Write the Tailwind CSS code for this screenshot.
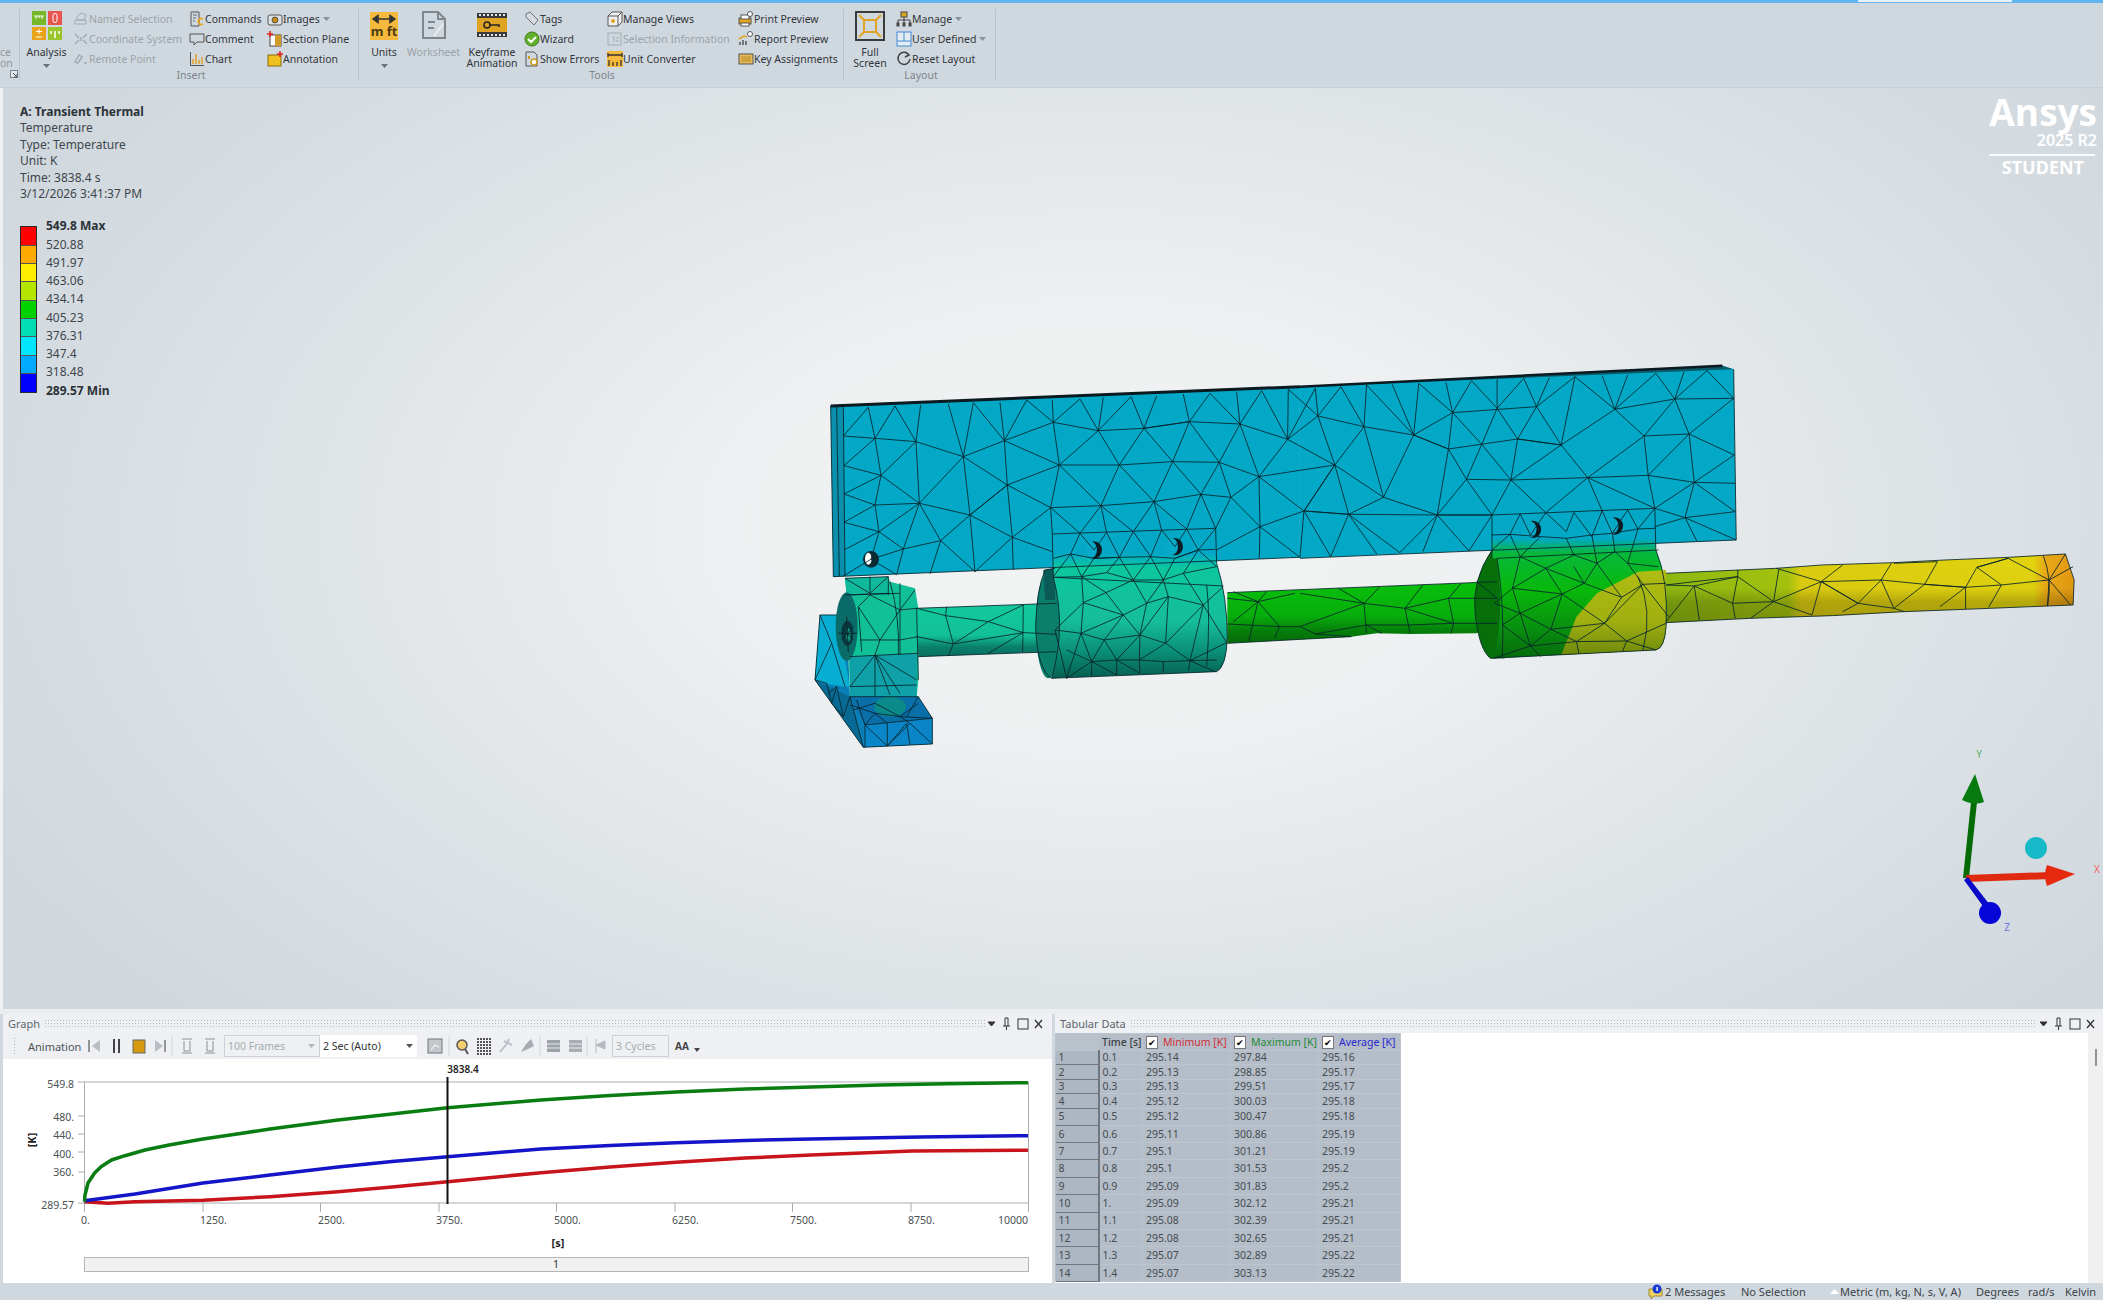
<!DOCTYPE html>
<html lang="en">
<head>
  <meta charset="UTF-8">
  <title>Ansys Mechanical - Transient Thermal</title>
  <script src="https://cdn.jsdelivr.net/npm/@tailwindcss/browser@4"></script>
</head>
<body class="font-['Noto_Sans',sans-serif] bg-[#d0d8df] overflow-hidden">
<div class="flex flex-col w-[2103px] h-[1300px]">

  <!-- top strip -->
  <div class="flex h-[3px] bg-[#62b4f0]"><div class="ml-[1858px] w-[154px] h-[2px] bg-[#e9f2fa]"></div></div>

  <!-- ribbon -->
  <div class="flex h-[85px] pt-[6px] bg-[#d0d8df] text-[10.5px] leading-none text-[#30363b] border-b border-[#c6ced5]">

    <div class="w-[20px] h-[71px] border-r border-[#bcc4cb] pr-[8px] text-right text-[#8e979e] flex flex-col overflow-hidden">
      <div class="h-[38px]"></div>
      <div class="leading-[10.5px]">ce<br>on</div>
      <svg class="ml-[10px] mt-[2px] shrink-0" width="9" height="9" viewBox="0 0 9 9"><rect x=".5" y=".5" width="7" height="7" fill="#e6e9ec" stroke="#7a848c"/><path d="M3 3l4 4M7 4v3H4" fill="none" stroke="#4b5358"/></svg>
    </div>

    <!-- Insert -->
    <div class="w-[339px] h-[71px] border-r border-[#bcc4cb] flex flex-col">
      <div class="h-[60px] flex">
        <div class="w-[48px] flex flex-col items-center">
          <div class="mt-[2px] grid grid-cols-[14px_14px] grid-rows-[14px_13px] gap-[2px] ml-[5px]">
            <div class="bg-[#76b82a] flex items-center justify-center"><svg width="10" height="6"><path d="M0 1h10M2 1v3M5 1v2M8 1v3" stroke="#fff"/></svg></div>
            <div class="bg-[#e8554e] flex items-center justify-center"><svg width="6" height="10"><rect x="1" y=".5" width="4" height="9" rx="2" fill="none" stroke="#fff"/></svg></div>
            <div class="bg-[#e8a31a] flex items-center justify-center"><svg width="8" height="9"><path d="M4 0v5M1 2.5h6M1 8h6" stroke="#fff"/></svg></div>
            <div class="bg-[#9ac52b] flex items-center justify-center"><svg width="10" height="8"><path d="M1 1v3M5 1v7M9 1v3" stroke="#fff" stroke-width="1.5"/></svg></div>
          </div>
          <div class="mt-[7px] ml-[5px]">Analysis</div>
          <svg class="mt-[6px] ml-[5px]" width="7" height="4"><path d="M0 0h7L3.5 4z" fill="#6a7177"/></svg>
        </div>
        <div class="w-[112px] ml-[5px] text-[#9aa3aa]">
          <div class="flex items-center h-[20px]"><svg class="w-[16px] h-[16px] shrink-0" viewBox="0 0 16 16" fill="none" stroke="#a2abb2"><path d="M4 6l4-4 5 2-2 5H4zM2 9h11v4H2z"/></svg><span>Named Selection</span></div>
          <div class="flex items-center h-[20px]"><svg class="w-[16px] h-[16px] shrink-0" viewBox="0 0 16 16" fill="none" stroke="#a2abb2" stroke-width="1.5"><path d="M2 3l4 4M14 3l-4 4M2 13l4-4M14 13l-4-4M8 6v4"/></svg><span class="whitespace-nowrap">Coordinate System</span></div>
          <div class="flex items-center h-[20px]"><svg class="w-[16px] h-[16px] shrink-0" viewBox="0 0 16 16" fill="none" stroke="#a2abb2" stroke-width="1.5"><path d="M2 11l4-7 3 2-4 6zM11 12h3"/></svg><span>Remote Point</span></div>
        </div>
        <div class="w-[78px] ml-[4px]">
          <div class="flex items-center h-[20px]"><svg class="w-[16px] h-[16px] shrink-0" viewBox="0 0 16 16" fill="none"><path d="M2 1h8v14H2z" stroke="#555"/><path d="M4 4h4M4 7h3M4 10h2" stroke="#666"/><path d="M14 8a3 3 0 1 0 0 5" stroke="#e8a31a" stroke-width="1.8"/></svg><span>Commands</span></div>
          <div class="flex items-center h-[20px]"><svg class="w-[16px] h-[16px] shrink-0" viewBox="0 0 16 16" fill="none" stroke="#555"><path d="M1 3h14v8H8l-3 3v-3H1z"/></svg><span>Comment</span></div>
          <div class="flex items-center h-[20px]"><svg class="w-[16px] h-[16px] shrink-0" viewBox="0 0 16 16" fill="none"><path d="M1.5 1v13.5H15" stroke="#555"/><path d="M4 13V8M7 13V3M10 13V9M13 13V6" stroke="#e0a020" stroke-width="1.5"/></svg><span>Chart</span></div>
        </div>
        <div class="w-[82px]">
          <div class="flex items-center h-[20px]"><svg class="w-[16px] h-[16px] shrink-0" viewBox="0 0 16 16"><rect x="1" y="4" width="14" height="10" rx="2" fill="#dfe3e6" stroke="#555"/><circle cx="8" cy="9" r="3" fill="#c98a12" stroke="#555"/></svg><span>Images</span><svg class="ml-[3px]" width="7" height="4"><path d="M0 0h7L3.5 4z" fill="#8a9197"/></svg></div>
          <div class="flex items-center h-[20px]"><svg class="w-[16px] h-[16px] shrink-0" viewBox="0 0 16 16"><rect x="3" y="4" width="11" height="11" fill="#fff" stroke="#444"/><path d="M8 4h6v11H8z" fill="#d09a28"/><path d="M3 0v6M0 3h6" stroke="#e02020" stroke-width="1.5"/></svg><span class="whitespace-nowrap">Section Plane</span></div>
          <div class="flex items-center h-[20px]"><svg class="w-[16px] h-[16px] shrink-0" viewBox="0 0 16 16"><rect x="1" y="4" width="13" height="11" fill="#f0c020" stroke="#8a6a10"/><path d="M13 0v6M10 3h6" stroke="#e02020" stroke-width="1.5"/></svg><span>Annotation</span></div>
        </div>
      </div>
      <div class="text-center text-[#7c858c] ml-[4px] mt-[1px]">Insert</div>
    </div>

    <!-- Tools -->
    <div class="w-[485px] h-[71px] border-r border-[#bcc4cb] flex flex-col">
      <div class="h-[60px] flex">
        <div class="w-[50px] flex flex-col items-center">
          <svg class="mt-[3px]" width="28" height="28" viewBox="0 0 28 28"><rect width="28" height="28" fill="#f5b93c"/><path d="M3 7h22M3 7l5-3.5v7zM25 7l-5-3.5v7z" fill="#333" stroke="#333" stroke-width="1.5"/><text x="14" y="24" text-anchor="middle" font-size="13" font-weight="700" fill="#4a3a10">m ft</text></svg>
          <div class="mt-[7px]">Units</div>
          <svg class="mt-[6px]" width="7" height="4"><path d="M0 0h7L3.5 4z" fill="#6a7177"/></svg>
        </div>
        <div class="w-[49px] flex flex-col items-center text-[#9aa3aa]">
          <svg class="mt-[1px]" width="26" height="30" viewBox="0 0 26 30" fill="none" stroke="#7f878d" stroke-width="2"><path d="M2 2h15l7 7v19H2zM17 2v7h7M7 12h7M7 18h6" /><path d="M22 14l-9 12" stroke="#e8ecef"/></svg>
          <div class="mt-[7px]">Worksheet</div>
        </div>
        <div class="w-[62px] ml-[3px] flex flex-col items-center">
          <svg class="mt-[4px]" width="30" height="24" viewBox="0 0 30 24"><rect y="0" width="30" height="24" fill="#3b3b3b"/><rect y="5" width="30" height="14" fill="#e0a422"/><path d="M2 2h2M6 2h2M10 2h2M14 2h2M18 2h2M22 2h2M26 2h2M2 22h2M6 22h2M10 22h2M14 22h2M18 22h2M22 22h2M26 22h2" stroke="#e6e6e6" stroke-width="2"/><circle cx="10" cy="12" r="3" fill="none" stroke="#222" stroke-width="1.5"/><path d="M13 12h9v2" fill="none" stroke="#222" stroke-width="1.5"/></svg>
          <div class="mt-[10px] leading-[10.5px] text-center">Keyframe<br>Animation</div>
        </div>
        <div class="w-[83px] ml-[1px]">
          <div class="flex items-center h-[20px]"><svg class="w-[16px] h-[16px] shrink-0" viewBox="0 0 16 16" fill="#d8dcdf" stroke="#6a7177"><path d="M2 3l4-2 8 8-4 5-8-8z"/></svg><span>Tags</span></div>
          <div class="flex items-center h-[20px]"><svg class="w-[16px] h-[16px] shrink-0" viewBox="0 0 16 16"><circle cx="8" cy="8" r="7" fill="#62b02a" stroke="#3e7a18"/><path d="M4 8l3 3 5-5" fill="none" stroke="#fff" stroke-width="2"/></svg><span>Wizard</span></div>
          <div class="flex items-center h-[20px]"><svg class="w-[16px] h-[16px] shrink-0" viewBox="0 0 16 16" fill="none"><path d="M2 1h8l3 3v11H2z" stroke="#555"/><circle cx="10" cy="11" r="3" fill="#fff" stroke="#c89a20" stroke-width="1.5"/><path d="M4 5h2v3H4z" fill="#c89a20"/></svg><span class="whitespace-nowrap">Show Errors</span></div>
        </div>
        <div class="w-[131px]">
          <div class="flex items-center h-[20px]"><svg class="w-[16px] h-[16px] shrink-0" viewBox="0 0 16 16" fill="#eef0f2" stroke="#555"><path d="M1 5h10v10H1zM1 5l4-4h10v10l-4 4M11 5l4-4"/><circle cx="6" cy="10" r="2" fill="#e0a422" stroke="none"/></svg><span>Manage Views</span></div>
          <div class="flex items-center h-[20px] text-[#9aa3aa]"><svg class="w-[16px] h-[16px] shrink-0" viewBox="0 0 16 16" fill="none" stroke="#a2abb2"><rect x="1" y="2" width="13" height="12"/><path d="M5 6h2v5M9 7h3M9 10h3"/></svg><span class="whitespace-nowrap">Selection Information</span></div>
          <div class="flex items-center h-[20px]"><svg class="w-[16px] h-[16px] shrink-0" viewBox="0 0 16 16"><rect width="16" height="16" fill="#f5b93c"/><path d="M1 4h14M1 2v4M15 2v4M2 9v6M6 11v4M10 11v4M14 9v6" stroke="#333" stroke-width="1.3"/></svg><span class="whitespace-nowrap">Unit Converter</span></div>
        </div>
        <div class="w-[95px]">
          <div class="flex items-center h-[20px]"><svg class="w-[16px] h-[16px] shrink-0" viewBox="0 0 16 16"><rect x="1" y="7" width="12" height="6" fill="#e0a422" stroke="#555"/><rect x="3" y="4" width="8" height="4" fill="#fff" stroke="#555"/><rect x="3" y="12" width="8" height="3" fill="#fff" stroke="#555"/><circle cx="12" cy="3" r="2.5" fill="#fff" stroke="#555"/></svg><span class="whitespace-nowrap">Print Preview</span></div>
          <div class="flex items-center h-[20px]"><svg class="w-[16px] h-[16px] shrink-0" viewBox="0 0 16 16" fill="none"><path d="M2 14V11M5 14V9M8 14V10" stroke="#555" stroke-width="1.5"/><path d="M1 8l5-3 3 1" stroke="#e0a422" stroke-width="1.5"/><circle cx="12" cy="3" r="2.5" fill="#fff" stroke="#555"/></svg><span class="whitespace-nowrap">Report Preview</span></div>
          <div class="flex items-center h-[20px]"><svg class="w-[16px] h-[16px] shrink-0" viewBox="0 0 16 16"><rect x="1" y="3" width="14" height="10" fill="#e8bc5a" stroke="#555"/><path d="M3 6h10M3 8h10M3 10h10" stroke="#b88a2a"/></svg><span class="whitespace-nowrap">Key Assignments</span></div>
        </div>
      </div>
      <div class="text-center text-[#7c858c] ml-[2px] mt-[1px]">Tools</div>
    </div>

    <!-- Layout -->
    <div class="w-[152px] h-[71px] border-r border-[#bcc4cb] flex flex-col">
      <div class="h-[60px] flex">
        <div class="w-[52px] flex flex-col items-center">
          <svg class="mt-[2px]" width="30" height="30" viewBox="0 0 30 30" fill="none"><rect x="1" y="1" width="28" height="28" stroke="#3a3a3a" stroke-width="2"/><rect x="9" y="9" width="12" height="12" stroke="#e0a422" stroke-width="2"/><path d="M4 4l5 5M26 4l-5 5M4 26l5-5M26 26l-5-5" stroke="#e0a422" stroke-width="2"/></svg>
          <div class="mt-[6px] leading-[10.5px] text-center">Full<br>Screen</div>
        </div>
        <div class="w-[95px]">
          <div class="flex items-center h-[20px]"><svg class="w-[16px] h-[16px] shrink-0" viewBox="0 0 16 16" fill="none" stroke="#444"><rect x="5" y="1" width="6" height="5" fill="#e0a422"/><path d="M8 6v3M2 12V9h12v3M8 9v3"/><rect x="1" y="12" width="2" height="3" fill="#444"/><rect x="7" y="12" width="2" height="3" fill="#444"/><rect x="13" y="12" width="2" height="3" fill="#444"/></svg><span>Manage</span><svg class="ml-[3px]" width="7" height="4"><path d="M0 0h7L3.5 4z" fill="#8a9197"/></svg></div>
          <div class="flex items-center h-[20px]"><svg class="w-[16px] h-[16px] shrink-0" viewBox="0 0 16 16" fill="#e4ecf2" stroke="#3f8ad6"><rect x="1" y="1" width="14" height="14"/><path d="M8 1v9M1 10h14"/></svg><span class="whitespace-nowrap">User Defined</span><svg class="ml-[3px] shrink-0" width="7" height="4"><path d="M0 0h7L3.5 4z" fill="#8a9197"/></svg></div>
          <div class="flex items-center h-[20px]"><svg class="w-[16px] h-[16px] shrink-0" viewBox="0 0 16 16" fill="none" stroke="#444" stroke-width="1.5"><path d="M13 4a6 6 0 1 0 1 4M9 1l4 3-4 2"/></svg><span class="whitespace-nowrap">Reset Layout</span></div>
        </div>
      </div>
      <div class="text-center text-[#7c858c] ml-[3px] mt-[1px]">Layout</div>
    </div>
  </div>

  <!-- 3D viewport -->
  <div class="flex h-[921px]">
    <div class="w-[3px] bg-[#eef0f2]"></div>
    <div class="relative flex-1 bg-[radial-gradient(ellipse_1250px_720px_at_1100px_440px,#f2f3f3_0%,#eef0f1_30%,#dfe4e7_62%,#d0d8de_100%)]">

      <div class="absolute left-[17px] top-[16px] text-[12px] leading-[16.4px] text-[#3e464c]">
        <div class="font-bold text-[#2c3237]">A: Transient Thermal</div>
        <div>Temperature</div>
        <div>Type: Temperature</div>
        <div>Unit: K</div>
        <div>Time: 3838.4 s</div>
        <div>3/12/2026 3:41:37 PM</div>
        <div class="flex mt-[15px]">
          <div class="flex flex-col self-start w-[17px] mt-[9px] border border-[#2a2a2a]">
            <div class="h-[18.3px] bg-[#ff0000] border-b border-[#555]"></div>
            <div class="h-[18.3px] bg-[#ffaa00] border-b border-[#555]"></div>
            <div class="h-[18.3px] bg-[#ffee00] border-b border-[#555]"></div>
            <div class="h-[18.3px] bg-[#b4e600] border-b border-[#555]"></div>
            <div class="h-[18.3px] bg-[#00d200] border-b border-[#555]"></div>
            <div class="h-[18.3px] bg-[#00dcb4] border-b border-[#555]"></div>
            <div class="h-[18.3px] bg-[#00e6ff] border-b border-[#555]"></div>
            <div class="h-[18.3px] bg-[#00aaff] border-b border-[#555]"></div>
            <div class="h-[18.3px] bg-[#0000ff]"></div>
          </div>
          <div class="ml-[9px] leading-[18.25px]">
            <div class="font-bold text-[#2c3237]">549.8 Max</div>
            <div>520.88</div><div>491.97</div><div>463.06</div><div>434.14</div><div>405.23</div><div>376.31</div><div>347.4</div><div>318.48</div>
            <div class="font-bold text-[#2c3237]">289.57 Min</div>
          </div>
        </div>
      </div>

      <div class="absolute right-[6px] top-[4px] flex flex-col items-end text-white">
        <div class="text-[37px] leading-[39px] font-bold font-['Open_Sans',sans-serif]">Ansys</div>
        <div class="text-[16px] leading-[18px] font-semibold">2025 R2</div>
        <div class="w-[106px] h-[2px] bg-white/90 mt-[5px] mr-[2px]"></div>
        <div class="text-[18px] leading-[20px] font-bold mt-[1px] mr-[13px]">STUDENT</div>
      </div>

      <!-- model -->
      <svg class="absolute inset-0" width="2100" height="921" viewBox="3 88 2100 921">
        <defs>
          <linearGradient id="b2" x1="0" y1="0" x2="0" y2="1">
            <stop offset="0" stop-color="#02a8c6"/><stop offset=".17" stop-color="#02a8c6"/><stop offset=".26" stop-color="#0cc79f"/><stop offset=".62" stop-color="#16bd9a"/><stop offset=".82" stop-color="#0a8f78"/><stop offset="1" stop-color="#065f50"/>
          </linearGradient>
          <linearGradient id="b3" x1="0" y1="0" x2="0" y2="1">
            <stop offset="0" stop-color="#02a8c6"/><stop offset=".2" stop-color="#02a8c6"/><stop offset=".3" stop-color="#07b83a"/><stop offset=".55" stop-color="#08b80a"/><stop offset=".8" stop-color="#088f10"/><stop offset="1" stop-color="#066a0c"/>
          </linearGradient>
          <linearGradient id="s1" x1="0" y1="0" x2="0" y2="1">
            <stop offset="0" stop-color="#12ca9c"/><stop offset=".6" stop-color="#12c098"/><stop offset=".82" stop-color="#0a7f6c"/><stop offset="1" stop-color="#0a6f60"/>
          </linearGradient>
          <linearGradient id="s2" x1="0" y1="0" x2="0" y2="1">
            <stop offset="0" stop-color="#08c00a"/><stop offset=".55" stop-color="#08ae0c"/><stop offset=".8" stop-color="#067e0a"/><stop offset="1" stop-color="#056a08"/>
          </linearGradient>
          <linearGradient id="s3" gradientUnits="userSpaceOnUse" x1="715" y1="0" x2="1512" y2="0">
            <stop offset="0" stop-color="#90ba10"/><stop offset=".3" stop-color="#a6c40e"/><stop offset=".33" stop-color="#dccd10"/><stop offset=".9" stop-color="#e2d40e"/><stop offset=".93" stop-color="#e8a816"/><stop offset="1" stop-color="#e49a12"/>
          </linearGradient>
          <linearGradient id="sh" x1="0" y1="0" x2="0" y2="1">
            <stop offset="0" stop-color="#000" stop-opacity="0"/><stop offset=".5" stop-color="#000" stop-opacity=".02"/><stop offset=".7" stop-color="#000" stop-opacity=".2"/><stop offset="1" stop-color="#000" stop-opacity=".25"/>
          </linearGradient>
          <linearGradient id="pt" x1="0" y1="0" x2="0" y2="1">
            <stop offset="0" stop-color="#b0bc12"/><stop offset=".6" stop-color="#a0b010"/><stop offset="1" stop-color="#6e8a0c"/>
          </linearGradient>
        </defs>

        <!-- right half, read off at 1.953 x 3 -->
        <g transform="translate(1300 350) scale(.512 .3333)">
          <path d="M0,110L825,47L847,58L852,570L0,625Z" fill="#02a8c6"/>
          <path d="M0,110L825,47L847,58Z" fill="#0a5a6a"/>
          <path d="M0,110L825,47" fill="none" stroke="#0a1a20" stroke-width="2.5" vector-effect="non-scaling-stroke"/>
          <path d="M-142,728L385,695L385,825L345,850L215,852L150,850L100,860L-142,880Z" fill="url(#s2)"/>
          <path d="M715,670L930,655L1020,645L1160,638L1260,630L1385,622L1495,612L1512,690L1510,765L1300,778L1180,785L1040,797L880,805L715,818Z" fill="url(#s3)"/>
          <path d="M715,670L930,655L1020,645L1160,638L1260,630L1385,622L1495,612L1512,690L1510,765L1300,778L1180,785L1040,797L880,805L715,818Z" fill="url(#sh)"/>
          <path d="M375,600Q335,690 342,790Q350,900 372,925L400,925L400,600Z" fill="#066f0a"/>
          <path d="M375,495L693,475L695,600Q720,690 715,830Q712,895 695,900L378,925Q400,800 385,625L375,625Z" fill="url(#b3)"/>
          <path d="M715,660L660,665L580,730L540,800L510,915L695,900Q712,895 715,830Z" fill="url(#pt)"/>
          <ellipse cx="455" cy="538" rx="16" ry="26" fill="#0a1a20"/><ellipse cx="447" cy="538" rx="15" ry="26" fill="#06aac6"/>
          <ellipse cx="615" cy="528" rx="16" ry="26" fill="#0a1a20"/><ellipse cx="607" cy="528" rx="15" ry="26" fill="#06aac6"/>
          <path fill="none" stroke="#07242b" stroke-opacity=".85" stroke-width="1" vector-effect="non-scaling-stroke" d="
            M847,58L852,570L0,625
            M30,115L35,198L80,110L125,230L130,105L222,255L180,103M222,255L232,100L298,188L285,97M298,188L335,92L385,175L385,88M385,175L437,85L462,170L487,83M462,170L537,80L510,285M537,80L615,178L590,77M615,178L640,75M615,178L695,70L732,147L750,65M732,147L795,62L847,145
            M35,198L125,230L222,255L298,188L462,170M615,178L732,147L847,145M222,255L290,297L425,267L510,285M672,258L760,252L848,315
            M35,198L68,345L125,230L163,442L222,255L290,297L298,188L355,283L385,175L425,267L462,170L510,285L615,178L672,258L732,147L760,252L847,145M510,285L562,383L672,258L680,376L760,252L770,397L848,315
            M325,388L412,390L562,383L680,376L770,397L850,400
            M68,345L8,483L95,493L68,345M163,442L68,345M163,442L95,493M163,442L268,495L290,297M290,297L325,388L355,283L412,390L425,267L510,285L412,390M325,388L268,495L375,495L325,388M412,390L375,495M412,390L480,488L562,383L590,482M562,383L693,475L680,376M770,397L693,475M770,397L752,503L850,485M770,397L850,485M693,475L752,503L775,573M752,503L852,570M693,530L752,503
            M8,483L60,620L95,493L150,612M95,493L195,608L268,495L240,605M268,495L330,603L375,495M8,483L95,493L268,495L375,495
            M375,495L693,475M375,555L410,553L430,492L450,555L480,488L520,545L535,488L570,560L590,482L610,550L640,480L660,537L693,475M375,600L410,553L430,620L470,560L520,565L570,555M693,535L660,537L610,550L570,555M470,560L410,553M375,495L375,625M693,475L695,600M520,565L535,615M570,555L580,640M610,550L615,605M660,537L640,640
            M385,625L700,600M385,625Q400,770 395,925M430,620L480,655L535,615L580,640L615,605L640,640L700,650M480,655L415,715L430,620M415,715L512,732L480,655L555,700L535,650M512,732L555,700L628,742L580,640L555,700M628,742L670,703L640,640M670,703L715,700M670,703L720,800M628,742L595,820L512,732L430,790L415,715M430,790L380,760L415,715M430,790L490,838L512,732M490,838L595,820M595,820L670,703M595,820L638,873L715,820M490,838L450,888L430,790M450,888L378,925M450,888L395,825L430,790M490,838L540,875L595,820M540,875L450,888M540,875L638,873L695,900M540,875L545,912M638,873L630,905M450,888L470,920M660,680Q690,780 670,900
            M375,600Q335,690 342,790Q350,900 372,925L695,900Q712,895 715,830Q720,690 695,600
            M-142,745L-82,755L-10,730M-82,755L-100,872M-82,755L-40,830L0,830M-142,822L-40,830M-82,755L-130,815M-40,830L-50,865M-82,755L-65,725M-130,725L-82,755
            M0,730L125,760L205,775L290,745L385,745M125,760L75,715M125,760L0,830M125,760L155,712M205,775L240,705M205,775L300,820L385,820M125,760L130,850M205,775L215,850M0,830L30,852L130,825L215,825L300,820M290,745L300,820M290,745L315,700M345,695L385,745M30,852L100,860M130,825L160,850M300,820L295,850M-142,728L385,695M-142,880L100,860
            M715,670L930,655L1020,645L1160,638L1260,630L1385,622L1495,612L1512,690L1510,765L1300,778L1180,785L1040,797L880,805L715,818
            M715,705L770,708L855,680L925,755L1018,695L1090,760L1135,690L1160,775L1220,703L1300,712L1322,652L1383,625M715,705L855,680M770,708L715,815M770,708L845,760L855,680L855,660M770,708L780,810M845,760L850,805M925,755L935,660M845,760L925,755L1000,795L1018,695L930,655M1018,695L1060,645M1018,695L1135,690L1155,640M1135,690L1220,703L1245,635L1160,640M1090,760L1060,785M1160,775L1180,785M1220,703L1300,712L1370,705L1463,690L1383,625L1322,652L1370,705M1463,690L1495,612M1463,690L1510,650M1463,690L1505,765M1463,690L1460,768M1370,705L1345,772M1300,712L1300,778M1300,712L1250,770M1018,695L1090,760M1160,775L1090,760M925,755L880,805M1452,618Q1470,690 1460,768"/>
        </g>

        <!-- left half, read off at 3x -->
        <g transform="translate(800 350) scale(.3333)">
          <path d="M92,168L1500,110L1500,622L100,680Z" fill="#02a8c6"/>
          <path d="M92,168L130,166L135,678L100,680Z" fill="#0a8fac"/>
          <path d="M92,168L1500,110" fill="none" stroke="#0a1a20" stroke-width="3" vector-effect="non-scaling-stroke"/>
          <ellipse cx="213" cy="628" rx="24" ry="25" fill="#0b2a32"/><ellipse cx="205" cy="626" rx="10" ry="18" fill="#fff"/>

          <!-- pillow block -->
          <path d="M60,795L140,795L150,1040L350,1040L397,1105L397,1182L190,1192L45,990Z" fill="#0a7eb6"/>
          <path d="M60,795L110,795L150,1010L135,1010Q60,1000 45,990Z" fill="#08aed2"/>
          <path d="M45,990L150,1040L190,1192Z" fill="#086a94"/>
          <path d="M150,1040L355,1040L397,1105L195,1125Z" fill="#0a6ea8"/>
          <ellipse cx="270" cy="1070" rx="48" ry="30" fill="#0a8a88"/>
          <path d="M195,1125L397,1105L397,1182L190,1192Z" fill="#0a86c8"/>
          <path d="M135,685L265,680L270,695L345,715L355,775L355,990L350,1040L150,1040L140,735Z" fill="#12c098"/>
          <path d="M150,920L350,910L350,1040L150,1040Z" fill="#10a0a8"/>
          <path d="M135,685L265,680L265,735L140,735Z" fill="#10b99c"/>
          <ellipse cx="140" cy="830" rx="33" ry="103" fill="#0b6b68"/>
          <ellipse cx="142" cy="850" rx="18" ry="38" fill="#0a3840"/>
          <ellipse cx="145" cy="855" rx="7" ry="20" fill="#14a088"/>

          <!-- first shaft and long bearing -->
          <path d="M350,775L770,760L770,905L355,920Z" fill="url(#s1)"/>
          <ellipse cx="745" cy="825" rx="38" ry="160" fill="#0b7f6c"/>
          <path d="M730,660L765,655L765,750L735,750Z" fill="#0a5a58"/>
          <path d="M757,552L1247,535L1250,640Q1282,740 1282,860Q1280,950 1250,965L755,985Q800,830 760,682Z" fill="url(#b2)"/>
          <ellipse cx="882" cy="600" rx="24" ry="26" fill="#0a1a20"/><ellipse cx="873" cy="600" rx="18" ry="25" fill="#07aac8"/>
          <ellipse cx="1125" cy="590" rx="24" ry="26" fill="#0a1a20"/><ellipse cx="1116" cy="590" rx="18" ry="25" fill="#07aac8"/>

          <path fill="none" stroke="#07242b" stroke-opacity=".85" stroke-width="1" vector-effect="non-scaling-stroke" d="
            M92,168L100,680L1500,622M110,168L118,678M130,166L135,678
            M130,258L225,265L348,275L490,320L613,272L760,217L895,242L1032,235L1168,215L1320,222L1463,268L1554,198
            M132,347L243,376L358,460L510,495L622,405L778,345L958,345L1118,335L1258,337L1377,380L1512,483L1604,345
            M132,432L225,465L358,460M510,495L637,562L752,473L903,467L1062,455L1203,433L1293,442L1380,530L1512,483
            M132,517L237,545L310,597L422,572L358,460M237,545L225,465L243,376L225,265L205,172L130,258
            M225,265L285,168L348,275L362,165M445,162L490,320L520,158L613,272L600,157M613,272L680,150L760,217L757,150M760,217L840,147L895,242L910,143M895,242L993,140L1032,235L1070,138M1032,235L1168,215L1150,132M1168,215L1230,130L1320,222L1310,125M1320,222L1385,122L1463,268L1465,118L1554,198M1463,268L1546,115M1463,268L1604,345L1377,380
            M243,376L348,275L358,460L490,320L510,495M490,320L622,405L613,272L778,345L760,217M778,345L895,242L958,345L1032,235L1118,335L1168,215L1258,337L1320,222L1377,380L1463,268
            M132,347L225,265M622,405L510,495M622,405L752,473L778,345L903,467L958,345L1062,455L1118,335L1203,433L1258,337L1293,442L1377,380L1380,530M622,405L637,562
            M132,432L243,376M225,465L132,517M358,460L237,545M132,600L237,545M358,460L310,597M510,495L422,572M510,495L525,665L422,572L390,672M310,597L290,674L213,628L130,678M310,597L213,628L237,545M525,665L637,562L640,660M637,562L757,605M752,473L757,552M1380,530L1378,625M1293,442L1247,535M1380,530L1250,600M1380,530L1500,622L1512,483
            M752,473L840,550L903,467L920,548M903,467L1000,545L1062,455L1085,540M1062,455L1160,537L1203,433L1247,535
            M757,552L1247,535M757,552L760,682M1247,535L1250,640
            M760,625L812,612L840,550L882,600L920,548L958,622L1000,545L1052,620L1085,540L1125,590L1160,537L1195,600L1247,535M812,612L760,680M812,612L845,680L882,625L958,622L920,668M958,622L1000,690L1052,620L1090,690L1125,625L1195,600L1150,670M1195,600L1250,650M1247,598L1195,600L1125,625L1052,620L958,622L882,625L812,612
            M760,682L845,680L920,668L1000,690L1090,690L1150,670L1250,650M760,682L1270,708
            M845,680L918,728L1000,690L1040,760L1090,690L1105,740L1210,765L1150,670M1105,740L1040,760L970,795L918,728L850,758L845,680M850,758L970,795M850,758L843,850L970,795L1020,855L1040,760M843,850L913,870L970,795M913,870L1020,855L1097,880L1105,740M1020,855L1105,740M1097,880L1210,765L1280,878M1210,765L1270,710M1097,880L1170,932L1280,878M1170,932L1210,765M843,850L765,840L850,758M765,840L800,985M800,985L843,850L875,935L913,870L950,930L1020,855L1018,930L1097,880
            M800,900L875,935L950,930L1018,930L1090,935L1170,932L1250,930M875,935L875,980M950,930L950,975M1018,930L1020,970M1090,935L1090,965M1170,932L1165,962M1170,932L1245,965M800,985L875,935M950,975L875,935M1020,970L950,930M1220,705Q1232,800 1220,950
            M755,985L1250,965Q1280,950 1282,860Q1282,740 1250,640M760,682Q800,830 755,985Q712,960 707,830Q710,720 735,660L765,655
            M135,685L265,680L265,735M135,735L265,730M135,685L210,730L265,680M210,680L210,730
            M150,735L300,730M175,770L210,735L300,780M175,770L240,870L300,780M180,870L240,870L300,870M175,770L185,905M300,700L300,915M270,695Q300,800 295,915M240,870L225,915M150,920L355,910M350,775L300,780M300,870L355,860M345,720L300,780
            M225,915L150,1010M225,915L270,1035M225,915L225,1040M225,915L300,1030M225,915L350,990M150,1010L350,1005M350,775L355,990
            M350,775L437,797L565,815L670,848L772,853M350,860L460,882L565,815M460,882L670,848M565,815L670,765M437,797L460,882M460,882L445,918M670,765L668,905M565,910L670,848M440,770L437,797M350,775L770,760M355,920L770,905
            M60,795L110,795M60,795L45,990M60,795L95,880M95,880L45,990M95,880L135,1010M45,990L190,1192L397,1182L397,1105L355,1040L150,1040L190,1192
            M45,990L80,1000L95,1060L110,1010L130,1100L150,1040M110,1010L85,1030M95,1060L130,1100
            M195,1125L397,1105M195,1125L262,1188L330,1120L397,1182M195,1125L195,1192M262,1120L262,1188L320,1120L330,1185M150,1065L225,1090L195,1125M355,1040L320,1100M160,1080L225,1060L300,1100L355,1060M225,1090L262,1120M225,1090L300,1100L330,1120M170,1050L195,1125M300,1100L397,1105"/>
          <path d="M140,800L145,905M125,830L160,870M160,830L125,870M115,850L172,850" stroke="#082a30" fill="none" vector-effect="non-scaling-stroke"/>
        </g>

        <!-- triad -->
        <g>
          <path d="M1963,878L1971,802L1977,802L1969,878Z" fill="#056b06"/>
          <path d="M1975,774L1984,802Q1974,806 1962,800Z" fill="#077a10"/>
          <path d="M1966,875L2050,872L2050,879L1966,882Z" fill="#e02a10"/>
          <path d="M2047,865L2075,874L2047,886Q2043,875 2047,865Z" fill="#e62a10"/>
          <path d="M1964,880L1968,877L1990,905L1985,909Z" fill="#0808c8"/>
          <circle cx="1990" cy="913" r="11" fill="#0606d8"/>
          <circle cx="2036" cy="848" r="11" fill="#16b9c8"/>
          <text x="1979" y="758" text-anchor="middle" font-size="10" fill="#5cb27a">Y</text>
          <text x="2097" y="873" text-anchor="middle" font-size="10" fill="#ee6a5f">X</text>
          <text x="2007" y="931" text-anchor="middle" font-size="10" fill="#6f74e0">Z</text>
        </g>
      </svg>
    </div>
  </div>

  <div class="h-[5px] bg-[#ebedf1]"></div>

  <!-- bottom panels -->
  <div class="flex h-[269px] text-[11px] leading-none text-[#3c4348]">

    <!-- Graph -->
    <div class="ml-[3px] w-[1049px] flex flex-col bg-[#eef0f3]">
      <div class="flex items-center h-[19px] pl-[5px] pr-[8px] text-[#5d656b]">
        <span>Graph</span>
        <div class="ml-[4px] flex-1 h-[9px] bg-[radial-gradient(#b6babe_0.7px,transparent_0.8px)] bg-[length:3px_3px]"></div>
        <svg class="ml-[3px]" width="56" height="14" viewBox="0 0 56 14" fill="none" stroke="#333"><path d="M0 5h7l-3.5 4z" fill="#333"/><path d="M17 9V1h3v8M15 9h7M18.5 9v4"/><rect x="30" y="2" width="10" height="10"/><path d="M47 3l7 8M54 3l-7 8" stroke-width="1.3"/></svg>
      </div>
      <div class="flex items-center h-[26px] text-[#4b5358]">
        <div class="ml-[10px] w-[3px] h-[18px] bg-[radial-gradient(#a9aeb3_0.7px,transparent_0.8px)] bg-[length:3px_3px]"></div>
        <span class="ml-[12px] w-[58px]">Animation</span>
        <svg class="shrink-0" width="135" height="22" viewBox="0 0 135 22" fill="none">
          <path d="M3 5v12" stroke="#777" stroke-width="1.5"/><path d="M14 5v12l-8-6z" fill="#b8bec3"/>
          <path d="M28 4v14M33 4v14" stroke="#444" stroke-width="2"/>
          <rect x="47" y="5" width="12" height="13" fill="#d69a10" stroke="#666"/>
          <path d="M69 5v12l8-6z" fill="#b8bec3"/><path d="M79 5v12" stroke="#777" stroke-width="1.5"/>
          <path d="M86 1v20" stroke="#d5d8db"/>
          <path d="M96 4h10M96 18h10M98 6v10h6V6" stroke="#8b9297"/><path d="M119 4h10M119 18h10M121 6v10h6V6" stroke="#8b9297"/>
        </svg>
        <div class="ml-[3px] w-[96px] h-[22px] flex items-center justify-between pl-[3px] pr-[4px] border border-[#cdd1d5] text-[#a5acb1] text-[10.5px]"><span>100 Frames</span><svg width="7" height="4"><path d="M0 0h7L3.5 4z" fill="#b0b6bb"/></svg></div>
        <div class="w-[97px] h-[22px] flex items-center justify-between pl-[3px] pr-[4px] bg-white text-[#333] text-[10.5px]"><span>2 Sec (Auto)</span><svg width="7" height="4"><path d="M0 0h7L3.5 4z" fill="#555"/></svg></div>
        <svg class="ml-[6px] shrink-0" width="188" height="22" viewBox="0 0 188 22" fill="none">
          <rect x="5" y="4" width="14" height="14" fill="#c3c8cc" stroke="#6f777d"/><path d="M8 15l4-5 4 2" stroke="#fff"/>
          <path d="M26 1v20" stroke="#d5d8db"/>
          <circle cx="39" cy="10" r="5" fill="#f4cf70" stroke="#555" stroke-width="1.5"/><path d="M42 14l3 5" stroke="#555" stroke-width="2"/>
          <path d="M54 4h14M54 7h14M54 10h14M54 13h14M54 16h14M54 19h14" stroke="#555" stroke-dasharray="2 1" stroke-width="2"/>
          <path d="M77 17l6-7 3-6M81 6l8 4" stroke="#bcc2c7" stroke-width="2"/>
          <path d="M98 17l5-8 5-5 3 7-6 3z" fill="#a5abb0"/>
          <path d="M117 1v20" stroke="#d5d8db"/>
          <rect x="124" y="5" width="13" height="12" fill="#9ca3a8"/><path d="M124 9h13M124 13h13" stroke="#e8eaec"/>
          <rect x="146" y="5" width="13" height="12" fill="#a8aeb3"/><path d="M146 9h13M146 13h13" stroke="#e8eaec"/>
          <path d="M164 1v20" stroke="#d5d8db"/>
          <path d="M173 4v14M173 10l9-4v8z" fill="#b5bbc0" stroke="#b5bbc0"/>
        </svg>
        <div class="ml-[1px] w-[57px] h-[22px] flex items-center pl-[3px] border border-[#cdd1d5] text-[#a5acb1] text-[10.5px]">3 Cycles</div>
        <span class="ml-[6px] font-bold text-[10px] text-[#444]">AA</span>
        <svg class="ml-[5px] mt-[8px]" width="6" height="4"><path d="M0 0h6L3 4z" fill="#444"/></svg>
      </div>
      <div class="flex-1 bg-white">
        <svg class="block" width="1049" height="224" viewBox="3 1059 1049 224" font-size="10.5" fill="#4a4f53">
          <path d="M84.5 1082H1028.5V1203H84.5ZM78 1082h7M78 1116h7M78 1134h7M78 1152h7M78 1172h7M78 1203h7M84.5 1203v9M203 1203v9M320.5 1203v9M439 1203v9M556.5 1203v9M675 1203v9M792.5 1203v9M911 1203v9M1028.5 1203v9" fill="none" stroke="#a8adb1"/>
          <polyline fill="none" stroke="#c8151b" stroke-width="3.5" stroke-linejoin="round" points="84.5,1201.7 108,1203.3 135,1201.7 203,1200.3 270,1196.7 338,1191.7 392,1187 447.5,1181.7 541,1172.7 610,1167 676,1162.3 745,1158 811,1155 912,1151 1028,1150.3"/>
          <polyline fill="none" stroke="#1414c8" stroke-width="3.5" stroke-linejoin="round" points="84.5,1200.7 135,1194 203,1183 270,1175 338,1167 392,1161.5 447.5,1156.7 541,1149 610,1145.5 676,1142.7 745,1140.5 811,1139 920,1137 1028,1135.7"/>
          <polyline fill="none" stroke="#0a7d12" stroke-width="3.5" stroke-linejoin="round" points="84.5,1201.7 85,1195 88,1183 94.6,1173 101,1166.7 111.5,1160 125,1155.7 145,1150 169,1145 203,1139 237,1134 270,1129 338,1120 392,1114 447.5,1107.7 541,1100 610,1095.5 676,1092 745,1089 811,1087 880,1085 946,1083.7 1028,1082.7"/>
          <path d="M447.5 1077V1204" stroke="#111" stroke-width="2"/>
          <text x="463" y="1073" text-anchor="middle" font-weight="600" font-size="10" fill="#222">3838.4</text>
          <g text-anchor="end"><text x="74" y="1088">549.8</text><text x="74" y="1121">480.</text><text x="74" y="1139">440.</text><text x="74" y="1158">400.</text><text x="74" y="1176">360.</text><text x="74" y="1209">289.57</text></g>
          <g><text x="81" y="1224">0.</text><text x="200" y="1224">1250.</text><text x="318" y="1224">2500.</text><text x="436" y="1224">3750.</text><text x="554" y="1224">5000.</text><text x="672" y="1224">6250.</text><text x="790" y="1224">7500.</text><text x="908" y="1224">8750.</text><text x="1028" y="1224" text-anchor="end">10000</text></g>
          <text x="558" y="1247" text-anchor="middle" font-weight="700" font-size="11" fill="#222">[s]</text>
          <text transform="translate(36 1140) rotate(-90)" text-anchor="middle" font-weight="700" font-size="11" fill="#222">[K]</text>
          <rect x="84.5" y="1257.5" width="944" height="14" fill="#f1f1f1" stroke="#b2b6b9"/>
          <text x="556" y="1268" text-anchor="middle" font-size="10.5" fill="#333">1</text>
        </svg>
      </div>
    </div>

    <div class="w-[3px]"></div>

    <!-- Tabular Data -->
    <div class="flex-1 flex flex-col bg-[#eef0f3]">
      <div class="flex items-center h-[19px] pl-[5px] pr-[7px] text-[#5d656b]">
        <span>Tabular Data</span>
        <div class="ml-[4px] flex-1 h-[9px] bg-[radial-gradient(#b6babe_0.7px,transparent_0.8px)] bg-[length:3px_3px]"></div>
        <svg class="ml-[3px]" width="56" height="14" viewBox="0 0 56 14" fill="none" stroke="#333"><path d="M0 5h7l-3.5 4z" fill="#333"/><path d="M17 9V1h3v8M15 9h7M18.5 9v4"/><rect x="30" y="2" width="10" height="10"/><path d="M47 3l7 8M54 3l-7 8" stroke-width="1.3"/></svg>
      </div>
      <div class="flex-1 flex bg-white">
        <table class="w-[345px] table-fixed border-collapse self-start bg-[#b5bec8] text-[10.5px] text-[#454c52] [&_td]:pl-[3px] [&_td]:border [&_td]:border-[#bdc5ce] [&_th]:pl-[3px] [&_th]:text-left [&_th]:font-normal [&_th]:bg-[#aeb7c1] [&_th]:border-t [&_th]:border-t-white [&_th]:border-b [&_th]:border-b-[#6f7880] [&_th]:border-r-2 [&_th]:border-r-[#6f7880]">
          <colgroup><col class="w-[43px]"><col class="w-[44px]"><col class="w-[88px]"><col class="w-[88px]"><col class="w-[82px]"></colgroup>
          <tr class="h-[17px]">
            <td class="bg-[#b9c1ca]"></td>
            <td class="text-[#3b4247] font-medium">Time [s]</td>
            <td class="border-l-2 border-l-[#e8ebee]"><div class="flex items-center gap-[5px]"><span class="flex items-center justify-center w-[12px] h-[13px] bg-white border border-[#777] text-black text-[9px]">✔</span><span class="text-[#d22f3b]">Minimum [K]</span></div></td>
            <td class="border-l-2 border-l-[#e8ebee]"><div class="flex items-center gap-[5px]"><span class="flex items-center justify-center w-[12px] h-[13px] bg-white border border-[#777] text-black text-[9px]">✔</span><span class="text-[#1f8a3a]">Maximum [K]</span></div></td>
            <td class="border-l-2 border-l-[#e8ebee]"><div class="flex items-center gap-[5px]"><span class="flex items-center justify-center w-[12px] h-[13px] bg-white border border-[#777] text-black text-[9px]">✔</span><span class="text-[#2a2ad0]">Average [K]</span></div></td>
          </tr>
          <tr class="h-[14.4px]"><th>1</th><td>0.1</td><td>295.14</td><td>297.84</td><td>295.16</td></tr>
          <tr class="h-[14.4px]"><th>2</th><td>0.2</td><td>295.13</td><td>298.85</td><td>295.17</td></tr>
          <tr class="h-[14.4px]"><th>3</th><td>0.3</td><td>295.13</td><td>299.51</td><td>295.17</td></tr>
          <tr class="h-[14.4px]"><th>4</th><td>0.4</td><td>295.12</td><td>300.03</td><td>295.18</td></tr>
          <tr class="h-[17px]"><th>5</th><td>0.5</td><td>295.12</td><td>300.47</td><td>295.18</td></tr>
          <tr class="h-[17.4px]"><th>6</th><td>0.6</td><td>295.11</td><td>300.86</td><td>295.19</td></tr>
          <tr class="h-[17.4px]"><th>7</th><td>0.7</td><td>295.1</td><td>301.21</td><td>295.19</td></tr>
          <tr class="h-[17.4px]"><th>8</th><td>0.8</td><td>295.1</td><td>301.53</td><td>295.2</td></tr>
          <tr class="h-[17.4px]"><th>9</th><td>0.9</td><td>295.09</td><td>301.83</td><td>295.2</td></tr>
          <tr class="h-[17.4px]"><th>10</th><td>1.</td><td>295.09</td><td>302.12</td><td>295.21</td></tr>
          <tr class="h-[17.4px]"><th>11</th><td>1.1</td><td>295.08</td><td>302.39</td><td>295.21</td></tr>
          <tr class="h-[17.4px]"><th>12</th><td>1.2</td><td>295.08</td><td>302.65</td><td>295.21</td></tr>
          <tr class="h-[17.4px]"><th>13</th><td>1.3</td><td>295.07</td><td>302.89</td><td>295.22</td></tr>
          <tr class="h-[17.4px]"><th>14</th><td>1.4</td><td>295.07</td><td>303.13</td><td>295.22</td></tr>
        </table>
        <div class="flex-1"></div>
        <div class="w-[15px] bg-[#f0f0f0] flex justify-center pt-[16px]"><div class="w-[2px] h-[17px] bg-[#8e9499]"></div></div>
      </div>
    </div>
  </div>

  <!-- status bar -->
  <div class="flex-1 flex items-center text-[11px] leading-none text-[#3c4348] bg-[#d0d8df]">
    <svg class="ml-[1648px]" width="16" height="15" viewBox="0 0 16 15"><path d="M1 5h13v7H6l-3 3v-3H1z" fill="#f0d060" stroke="#a08a30"/><circle cx="9" cy="5" r="4.5" fill="#1a3ad8"/><rect x="8.4" y="3" width="1.4" height="4" fill="#fff"/></svg>
    <span class="ml-[1px] w-[76px]">2 Messages</span>
    <span class="w-[89px]">No Selection</span>
    <svg width="9" height="5"><path d="M0 5h9L4.5 0z" fill="#fff"/></svg>
    <span class="ml-[1px] w-[136px] whitespace-nowrap">Metric (m, kg, N, s, V, A)</span>
    <span class="w-[52px]">Degrees</span>
    <span class="w-[37px]">rad/s</span>
    <span>Kelvin</span>
  </div>
</div>
</body>
</html>
